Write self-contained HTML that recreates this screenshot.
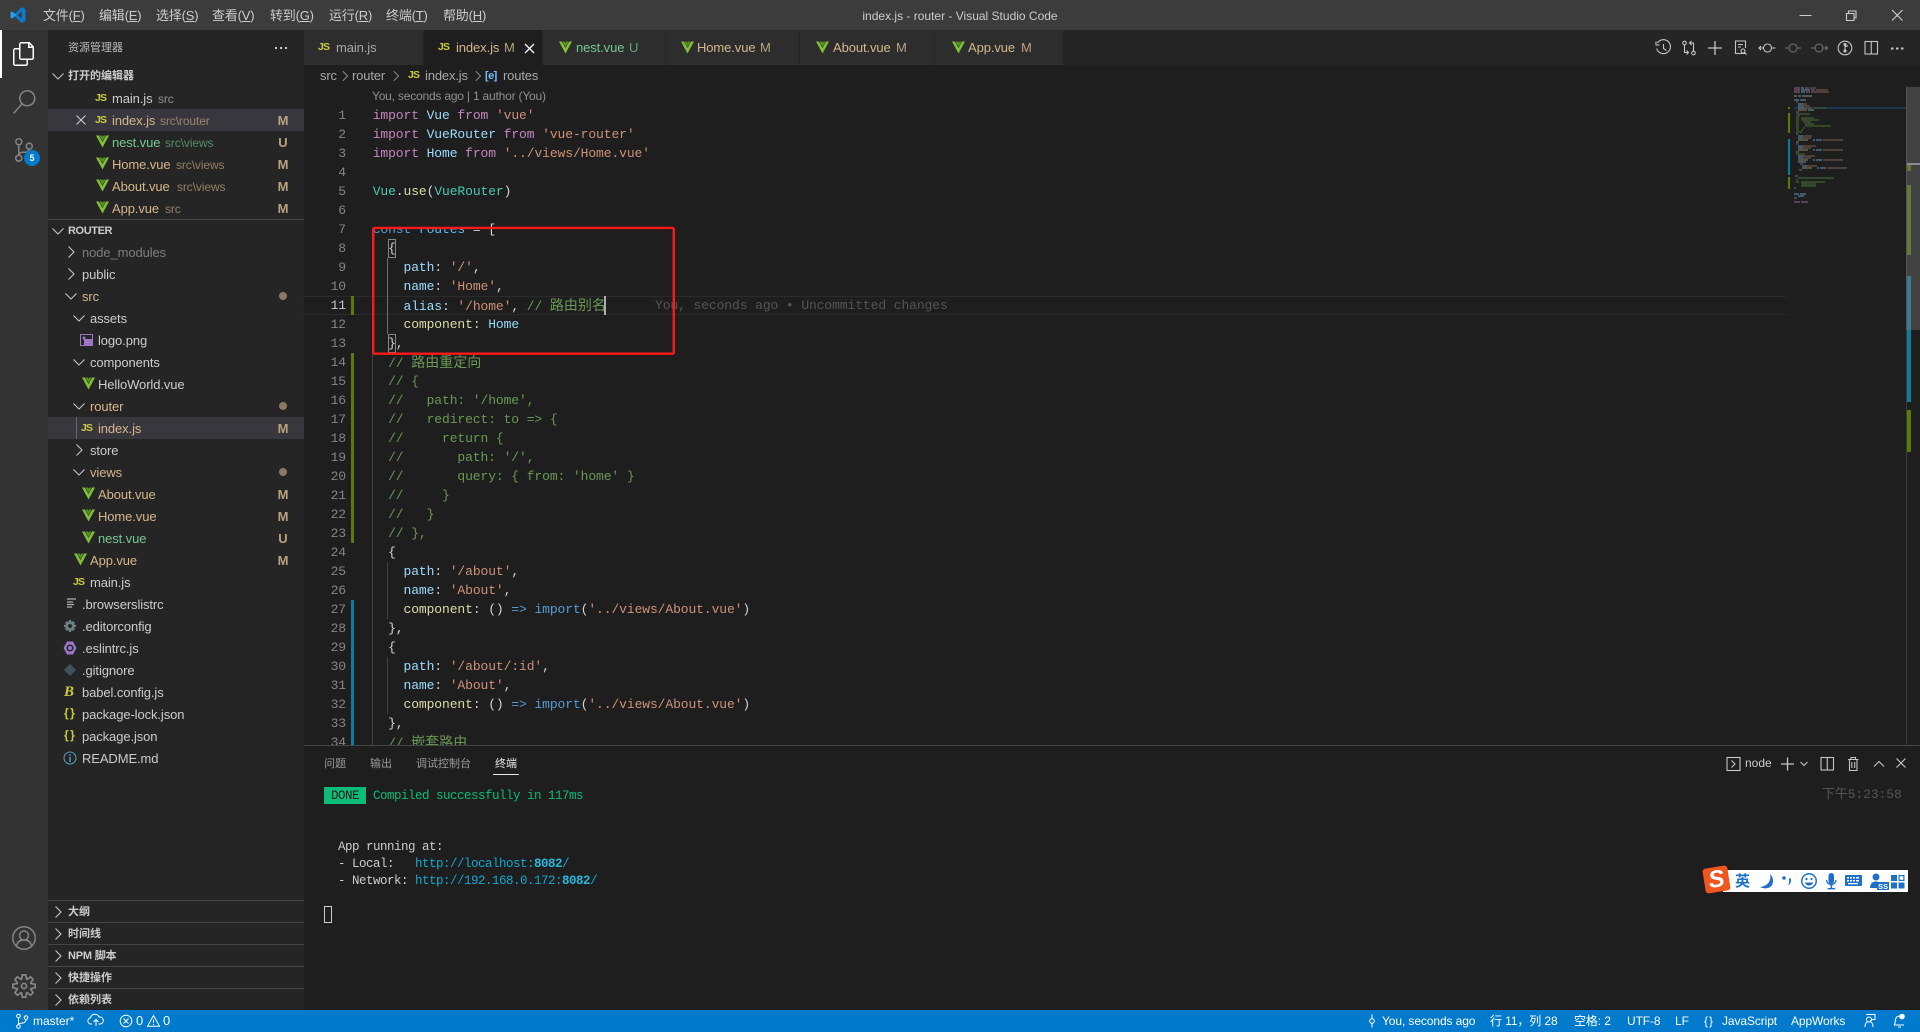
<!DOCTYPE html>
<html lang="zh"><head><meta charset="utf-8"><title>index.js - router - Visual Studio Code</title>
<style>
*{box-sizing:border-box;margin:0;padding:0}
html,body{width:1920px;height:1032px;overflow:hidden;background:#1e1e1e}
body{position:relative;font-family:"Liberation Sans","Noto Sans CJK SC",sans-serif;font-size:13px;color:#ccc}
.a{position:absolute}
.t{position:absolute;line-height:22px;height:22px;white-space:nowrap;letter-spacing:-.1px;margin-top:1px}
.d{position:absolute;line-height:22px;height:22px;white-space:nowrap;font-size:12px;opacity:.62;letter-spacing:-.1px;margin-top:1px}
.js{position:absolute;line-height:22px;height:22px;color:#cbcb41;font-size:10.5px;font-weight:700;letter-spacing:-.9px}
.h{position:absolute;line-height:22px;height:22px;font-size:11px;font-weight:700;white-space:nowrap;color:#ccc}
.m{color:#d5b78a}.u{color:#73c991}.dim{color:#7e7e7e}
.bd{position:absolute;left:276px;width:14px;text-align:center;line-height:22px;height:22px;font-weight:700;font-size:13px;color:#b9a27e;margin-top:1px}
.dot{position:absolute;left:279px;width:8px;height:8px;border-radius:50%;background:#8a7a63}
.sep{position:absolute;left:48px;width:256px;height:1px;background:#454545}
.tab{position:absolute;top:30px;height:35px;background:#2d2d2d;border-right:1px solid #252526}
.tt{position:absolute;top:37px;line-height:22px;white-space:nowrap;letter-spacing:-.1px;font-size:13px}
.menu{position:absolute;top:5px;line-height:22px;font-size:13px;white-space:nowrap;color:#ccc;letter-spacing:-.2px}
.menu u{text-decoration:underline;text-underline-offset:1px}
.cm{position:absolute;left:0;top:0;width:1920px;height:1032px}
.l{position:absolute;left:372.7px;height:19px;line-height:19px;white-space:pre;font-family:"Liberation Mono","Noto Sans CJK SC",monospace;font-size:13px;letter-spacing:-.1px;color:#d4d4d4}
.n{position:absolute;left:300px;width:46px;text-align:right;height:19px;line-height:19px;font-family:"Liberation Mono",monospace;font-size:13px;letter-spacing:-.1px;color:#858585}
.l u{text-decoration:none;font-family:"Noto Sans CJK SC",sans-serif;font-size:14px;letter-spacing:0}
.k{color:#c586c0}.v{color:#9cdcfe}.c{color:#4fc1ff}.s{color:#ce9178}.g{color:#6a9955}.f{color:#dcdcaa}.e{color:#4ec9b0}.b{color:#569cd6}
.st{position:absolute;top:1010px;line-height:22px;height:22px;font-size:12px;color:#fff;white-space:nowrap;letter-spacing:-.1px}
.bc{position:absolute;top:65px;line-height:22px;font-size:13px;color:#a8a8a8;white-space:nowrap;letter-spacing:-.15px}
.term{position:absolute;left:338px;height:17px;line-height:17px;white-space:pre;font-family:"Liberation Mono",monospace;font-size:12.5px;letter-spacing:-.5px;color:#ccc;margin-top:1px}
.pt{position:absolute;top:753px;line-height:22px;font-size:11px;color:#9a9a9a;white-space:nowrap}
.ic{fill:none;stroke:#c5c5c5;stroke-width:1.1}
</style></head><body>
<svg width="0" height="0" style="position:absolute"><defs>
<symbol id="vue" viewBox="0 0 13 13"><path fill="#80c038" d="M0 .5h2.8L6.5 7l3.7-6.5H13L6.5 12.5z"/><path fill="#5a9428" d="M3.4 .5h2.3l.8 1.4.8-1.4h2.3L6.5 6z"/></symbol>
<symbol id="cr" viewBox="0 0 16 16"><path fill="none" stroke="#c5c5c5" stroke-width="1.1" d="M5.5 2.5l5.5 5.5-5.5 5.5"/></symbol>
<symbol id="cd" viewBox="0 0 16 16"><path fill="none" stroke="#c5c5c5" stroke-width="1.1" d="M2.5 5.5L8 11l5.5-5.5"/></symbol>
</defs></svg>

<!-- title bar -->
<div class="a" style="left:0;top:0;width:1920px;height:30px;background:#3c3c3c"></div>
<svg class="a" style="left:9px;top:6px" width="18" height="18" viewBox="0 0 24 24"><path fill="#0a7bd0" fill-rule="evenodd" d="M17 1.5l5 2.5v16l-5 2.5-9-8.7-4 3L2 15.7V8.3l2-1 4 3zM17 7l-5.5 5 5.500 5z"/><path fill="#2fa6ef" d="M2 8.300l2-1 4 3 1.800 1.700-1.800 1.800-4 3L2 15.700z" opacity=".8"/></svg>
<div class="menu" style="left:43px">文件(<u>F</u>)</div>
<div class="menu" style="left:99px">编辑(<u>E</u>)</div>
<div class="menu" style="left:156px">选择(<u>S</u>)</div>
<div class="menu" style="left:212px">查看(<u>V</u>)</div>
<div class="menu" style="left:270px">转到(<u>G</u>)</div>
<div class="menu" style="left:329px">运行(<u>R</u>)</div>
<div class="menu" style="left:386px">终端(<u>T</u>)</div>
<div class="menu" style="left:443px">帮助(<u>H</u>)</div>
<div class="a" style="left:760px;top:5px;width:400px;text-align:center;line-height:22px;font-size:12px;color:#ccc">index.js - router - Visual Studio Code</div>
<svg class="cm" style="pointer-events:none;height:30px"><path stroke="#ccc" fill="none" d="M1799.500 15.500h12M1846.500 13.500h7.500v7h-7.500zM1848.500 13.500v-2.500h7.500v7h-2M1892 10l10.500 10.500M1902.500 10L1892 20.500" stroke-width="1.100"/></svg>

<!-- activity bar -->
<div class="a" style="left:0;top:30px;width:48px;height:980px;background:#333"></div>
<div class="a" style="left:0;top:30px;width:2px;height:48px;background:#fff"></div>
<svg class="a" style="left:12px;top:42px" width="24" height="24" viewBox="0 0 24 24"><path fill="#fff" d="M17.500 0h-9L7 1.500V6H2.500L1 7.500v15.070L2.500 24h12.070L16 22.570V18h4.700l1.300-1.430V4.500L17.500 0zm0 2.120l2.380 2.380H17.500V2.120zm-3 20.380h-12v-15H7v9.070L8.500 18h6v4.500zm6-6h-12v-15H16V6h4.500v10.500z"/></svg>
<svg class="a" style="left:12px;top:90px" width="24" height="24" viewBox="0 0 24 24"><path fill="#858585" d="M15.250 0a8.250 8.250 0 0 0-6.180 13.720L1 22.880l1.120 1 8.050-9.120A8.251 8.251 0 1 0 15.250.01V0zm0 15a6.750 6.750 0 1 1 0-13.500 6.750 6.750 0 0 1 0 13.500z"/></svg>
<svg class="a" style="left:12px;top:138px" width="24" height="24" viewBox="0 0 24 24"><path fill="#858585" d="M21.007 8.222A3.738 3.738 0 0 0 15.045 5.200a3.737 3.737 0 0 0 1.156 6.583 2.988 2.988 0 0 1-2.668 1.670h-2.990a4.456 4.456 0 0 0-2.989 1.165V7.400a3.737 3.737 0 1 0-1.494 0v9.117a3.776 3.776 0 1 0 1.816.099 2.990 2.990 0 0 1 2.668-1.667h2.990a4.484 4.484 0 0 0 4.223-3.039 3.736 3.736 0 0 0 3.250-3.687zM4.565 3.738a2.242 2.242 0 1 1 4.484 0 2.242 2.242 0 0 1-4.484 0zm4.484 16.441a2.242 2.242 0 1 1-4.484 0 2.242 2.242 0 0 1 4.484 0zm8.221-9.715a2.242 2.242 0 1 1 0-4.485 2.242 2.242 0 0 1 0 4.485z"/></svg>
<div class="a" style="left:24px;top:150px;width:16px;height:16px;border-radius:50%;background:#007acc;color:#fff;font-size:9px;font-weight:700;text-align:center;line-height:16px">5</div>
<svg class="a" style="left:12px;top:926px" width="24" height="24" viewBox="0 0 24 24" fill="none" stroke="#858585" stroke-width="1.500"><circle cx="12" cy="12" r="11.200"/><circle cx="12" cy="9.500" r="4.500"/><path d="M4.500 20c.800-4.500 3.500-6 7.500-6s6.700 1.500 7.500 6"/></svg>
<svg class="a" style="left:12px;top:974px" width="24" height="24" viewBox="0 0 24 24"><path fill="#858585" fill-rule="evenodd" d="M19.850 8.750l4.150.830v4.840l-4.150.830 2.350 3.520-3.430 3.430-3.520-2.350-.830 4.150H9.580l-.830-4.150-3.520 2.350-3.430-3.430 2.350-3.520L0 14.420V9.580l4.150-.830L1.800 5.230 5.230 1.800l3.520 2.350L9.580 0h4.840l.830 4.150 3.520-2.350 3.430 3.430-2.350 3.520zm-1.570 5.070l4-.810v-2l-4-.810-.540-1.300 2.290-3.430-1.430-1.430-3.430 2.290-1.300-.540-.810-4h-2l-.810 4-1.300.540-3.430-2.290-1.430 1.430L6.380 8.900l-.540 1.300-4 .810v2l4 .810.540 1.300-2.290 3.430 1.430 1.430 3.430-2.290 1.300.540.810 4h2l.810-4 1.300-.540 3.430 2.290 1.430-1.430-2.290-3.430.540-1.300zM12 8.570A3.430 3.430 0 1 1 12 15.430 3.430 3.430 0 0 1 12 8.570zm0 1.720a1.710 1.710 0 1 0 0 3.420 1.710 1.710 0 0 0 0-3.420z"/></svg>

<!-- sidebar -->
<div class="a" style="left:48px;top:30px;width:256px;height:980px;background:#252526"></div>
<div class="h" style="left:68px;top:37px;font-weight:400;color:#bbb">资源管理器</div>
<div class="a" style="left:275px;top:47px;width:2px;height:2px;background:#ccc"></div>
<div class="a" style="left:280px;top:47px;width:2px;height:2px;background:#ccc"></div>
<div class="a" style="left:285px;top:47px;width:2px;height:2px;background:#ccc"></div>
<svg class="a" style="left:50px;top:68px" width="16" height="16"><use href="#cd"/></svg>
<div class="h" style="left:68px;top:65px">打开的编辑器</div>
<div class="a" style="left:48px;top:109px;width:256px;height:22px;background:#37373d"></div>
<div class="js" style="left:95px;top:87px">JS</div><div class="t" style="left:112px;top:87px">main.js</div><div class="d" style="left:158px;top:87px">src</div>
<svg class="a" style="left:75px;top:114px" width="12" height="12"><path stroke="#ccc" stroke-width="1.100" d="M1.500 1.500l9 9M10.500 1.500l-9 9"/></svg>
<div class="js" style="left:95px;top:109px">JS</div><div class="t m" style="left:112px;top:109px">index.js</div><div class="d m" style="left:160px;top:109px">src\router</div><div class="bd" style="top:109px">M</div>
<svg class="a" style="left:96px;top:135px" width="13" height="13"><use href="#vue"/></svg><div class="t u" style="left:112px;top:131px">nest.vue</div><div class="d u" style="left:165px;top:131px">src\views</div><div class="bd u" style="top:131px">U</div>
<svg class="a" style="left:96px;top:157px" width="13" height="13"><use href="#vue"/></svg><div class="t m" style="left:112px;top:153px">Home.vue</div><div class="d m" style="left:176px;top:153px">src\views</div><div class="bd" style="top:153px">M</div>
<svg class="a" style="left:96px;top:179px" width="13" height="13"><use href="#vue"/></svg><div class="t m" style="left:112px;top:175px">About.vue</div><div class="d m" style="left:177px;top:175px">src\views</div><div class="bd" style="top:175px">M</div>
<svg class="a" style="left:96px;top:201px" width="13" height="13"><use href="#vue"/></svg><div class="t m" style="left:112px;top:197px">App.vue</div><div class="d m" style="left:165px;top:197px">src</div><div class="bd" style="top:197px">M</div>
<div class="sep" style="top:219px"></div>
<svg class="a" style="left:50px;top:223px" width="16" height="16"><use href="#cd"/></svg>
<div class="h" style="left:68px;top:220px;letter-spacing:-.4px">ROUTER</div>

<svg class="a" style="left:63px;top:244px" width="16" height="16"><use href="#cr"/></svg><div class="t dim" style="left:82px;top:241px">node_modules</div>
<svg class="a" style="left:63px;top:266px" width="16" height="16"><use href="#cr"/></svg><div class="t" style="left:82px;top:263px">public</div>
<svg class="a" style="left:63px;top:288px" width="16" height="16"><use href="#cd"/></svg><div class="t m" style="left:82px;top:285px">src</div><div class="dot" style="top:292px"></div>
<svg class="a" style="left:71px;top:310px" width="16" height="16"><use href="#cd"/></svg><div class="t" style="left:90px;top:307px">assets</div>
<svg class="a" style="left:80px;top:334px" width="13" height="12"><rect x=".5" y=".5" width="12" height="11" fill="none" stroke="#a074c4"/><path fill="#a074c4" d="M4 5h9v7H4z"/><circle cx="4" cy="4" r="1.500" fill="#a074c4"/></svg><div class="t" style="left:98px;top:329px">logo.png</div>
<svg class="a" style="left:71px;top:354px" width="16" height="16"><use href="#cd"/></svg><div class="t" style="left:90px;top:351px">components</div>
<svg class="a" style="left:82px;top:377px" width="13" height="13"><use href="#vue"/></svg><div class="t" style="left:98px;top:373px">HelloWorld.vue</div>
<svg class="a" style="left:71px;top:398px" width="16" height="16"><use href="#cd"/></svg><div class="t m" style="left:90px;top:395px">router</div><div class="dot" style="top:402px"></div>
<div class="a" style="left:48px;top:417px;width:256px;height:22px;background:#37373d"></div>
<div class="a" style="left:76px;top:417px;width:1px;height:22px;background:#6a6a6a"></div>
<div class="js" style="left:81px;top:417px">JS</div><div class="t m" style="left:98px;top:417px">index.js</div><div class="bd" style="top:417px">M</div>
<svg class="a" style="left:71px;top:442px" width="16" height="16"><use href="#cr"/></svg><div class="t" style="left:90px;top:439px">store</div>
<svg class="a" style="left:71px;top:464px" width="16" height="16"><use href="#cd"/></svg><div class="t m" style="left:90px;top:461px">views</div><div class="dot" style="top:468px"></div>
<svg class="a" style="left:82px;top:487px" width="13" height="13"><use href="#vue"/></svg><div class="t m" style="left:98px;top:483px">About.vue</div><div class="bd" style="top:483px">M</div>
<svg class="a" style="left:82px;top:509px" width="13" height="13"><use href="#vue"/></svg><div class="t m" style="left:98px;top:505px">Home.vue</div><div class="bd" style="top:505px">M</div>
<svg class="a" style="left:82px;top:531px" width="13" height="13"><use href="#vue"/></svg><div class="t u" style="left:98px;top:527px">nest.vue</div><div class="bd u" style="top:527px">U</div>
<svg class="a" style="left:74px;top:553px" width="13" height="13"><use href="#vue"/></svg><div class="t m" style="left:90px;top:549px">App.vue</div><div class="bd" style="top:549px">M</div>
<div class="js" style="left:73px;top:571px">JS</div><div class="t" style="left:90px;top:571px">main.js</div>
<svg class="a" style="left:67px;top:598px" width="10" height="10"><path stroke="#b0b0b0" stroke-width="1.300" d="M0 1h9M0 4h6M0 6.500h7M0 9h5"/></svg><div class="t" style="left:82px;top:593px">.browserslistrc</div>
<svg class="a" style="left:64px;top:620px" width="12" height="12" viewBox="0 0 24 24"><path fill="#6d8086" fill-rule="evenodd" d="M10 0h4l1 4 3-2 4 4-2 3 4 1v4l-4 1 2 3-4 4-3-2-1 4h-4l-1-4-3 2-4-4 2-3-4-1v-4l4-1-2-3 4-4 3 2zM12 8a4 4 0 1 0 0 8 4 4 0 0 0 0-8z"/></svg><div class="t" style="left:82px;top:615px">.editorconfig</div>
<svg class="a" style="left:63px;top:641px" width="14" height="14" viewBox="0 0 14 14"><path fill="#a074c4" fill-rule="evenodd" d="M4 .5h6L13.500 7 10 13.500H4L.5 7zM7 3.500a3.500 3.500 0 1 0 0 7 3.500 3.500 0 0 0 0-7z"/><circle cx="7" cy="7" r="2" fill="#7a82d8"/></svg><div class="t" style="left:82px;top:637px">.eslintrc.js</div>
<svg class="a" style="left:64px;top:664px" width="12" height="12" viewBox="0 0 12 12"><path fill="#41535b" d="M6 0l6 6-6 6-6-6z"/></svg><div class="t" style="left:82px;top:659px">.gitignore</div>
<div class="a" style="left:64px;top:681px;line-height:22px;color:#cbcb41;font-family:'Liberation Serif',serif;font-style:italic;font-weight:700;font-size:15px">B</div><div class="t" style="left:82px;top:681px">babel.config.js</div>
<div class="a" style="left:64px;top:703px;line-height:20px;color:#cbcb41;font-weight:700;font-size:12px;letter-spacing:1.500px">{}</div><div class="t" style="left:82px;top:703px">package-lock.json</div>
<div class="a" style="left:64px;top:725px;line-height:20px;color:#cbcb41;font-weight:700;font-size:12px;letter-spacing:1.500px">{}</div><div class="t" style="left:82px;top:725px">package.json</div>
<svg class="a" style="left:63px;top:751px" width="14" height="14" viewBox="0 0 14 14"><circle cx="7" cy="7" r="6" fill="none" stroke="#519aba" stroke-width="1.100"/><path stroke="#519aba" stroke-width="1.500" d="M7 3.200v1.600M7 6v5"/></svg><div class="t" style="left:82px;top:747px">README.md</div>

<div class="sep" style="top:900px"></div><div class="sep" style="top:922px"></div><div class="sep" style="top:944px"></div><div class="sep" style="top:966px"></div><div class="sep" style="top:988px"></div>
<svg class="a" style="left:50px;top:904px" width="16" height="16"><use href="#cr"/></svg><div class="h" style="left:68px;top:901px">大纲</div>
<svg class="a" style="left:50px;top:926px" width="16" height="16"><use href="#cr"/></svg><div class="h" style="left:68px;top:923px">时间线</div>
<svg class="a" style="left:50px;top:948px" width="16" height="16"><use href="#cr"/></svg><div class="h" style="left:68px;top:945px;letter-spacing:-.2px">NPM 脚本</div>
<svg class="a" style="left:50px;top:970px" width="16" height="16"><use href="#cr"/></svg><div class="h" style="left:68px;top:967px">快捷操作</div>
<svg class="a" style="left:50px;top:992px" width="16" height="16"><use href="#cr"/></svg><div class="h" style="left:68px;top:989px">依赖列表</div>

<!-- tab strip -->
<div class="a" style="left:304px;top:30px;width:1616px;height:35px;background:#252526"></div>
<div class="tab" style="left:304px;width:120px"></div>
<div class="tab" style="left:424px;width:119px;background:#1e1e1e"></div>
<div class="tab" style="left:543px;width:123px"></div>
<div class="tab" style="left:666px;width:134px"></div>
<div class="tab" style="left:800px;width:135px"></div>
<div class="tab" style="left:935px;width:129px"></div>
<div class="js" style="left:318px;top:36px">JS</div><div class="tt" style="left:336px;color:#a6a6a6">main.js</div>
<div class="js" style="left:438px;top:36px">JS</div><div class="tt m" style="left:456px">index.js</div><div class="tt" style="left:504px;color:#b9a27e">M</div>
<svg class="a" style="left:524px;top:43px" width="11" height="11"><path stroke="#fff" stroke-width="1.300" d="M1 1l9 9M10 1l-9 9"/></svg>
<svg class="a" style="left:559px;top:41px" width="13" height="13"><use href="#vue"/></svg><div class="tt u" style="left:576px">nest.vue</div><div class="tt u" style="left:629px;opacity:.75">U</div>
<svg class="a" style="left:681px;top:41px" width="13" height="13"><use href="#vue"/></svg><div class="tt m" style="left:697px">Home.vue</div><div class="tt" style="left:760px;color:#b9a27e">M</div>
<svg class="a" style="left:816px;top:41px" width="13" height="13"><use href="#vue"/></svg><div class="tt m" style="left:833px">About.vue</div><div class="tt" style="left:896px;color:#b9a27e">M</div>
<svg class="a" style="left:952px;top:41px" width="13" height="13"><use href="#vue"/></svg><div class="tt m" style="left:968px">App.vue</div><div class="tt" style="left:1021px;color:#b9a27e">M</div>

<!-- editor actions -->
<svg class="cm" style="height:66px" viewBox="0 0 1920 66" width="1920" height="66">
<g class="ic">
<path d="M1657.500 43a7 7 0 1 1-.800 5.500M1656 41.500v3.500h3.500M1663.500 44v4.500l3 2"/>
<circle cx="1684.500" cy="43" r="1.800"/><circle cx="1693.500" cy="53" r="1.800"/><path d="M1684.500 45v7.500h4M1686.500 50.500l2 2-2 2M1693.500 51v-8h-4M1691.500 41l-2 2 2 2"/>
<path stroke-width="1.300" d="M1708 48h14M1715 41v14"/>
<path d="M1745.500 53.500h-10v-12.500h10v7M1738 44.500h5M1738 47h3"/><circle cx="1743" cy="51" r="2"/><path d="M1744.500 52.500l2 2"/>
<circle cx="1767.500" cy="48" r="4"/><path d="M1759 48h4.500M1771.500 48h4M1761 46l-2 2 2 2"/>
<g stroke="#6f6f6f"><circle cx="1793" cy="48" r="4"/><path d="M1785 48h4M1797 48h4"/><circle cx="1819" cy="48" r="4"/><path d="M1811 48h4M1823 48h4.500M1825.500 46l2 2-2 2"/></g>
<circle cx="1845" cy="48" r="6.800"/><path d="M1845 44v7M1845 47l3-1.500"/><circle cx="1845" cy="44.500" r="1" fill="#c5c5c5"/><circle cx="1845" cy="51" r="1" fill="#c5c5c5"/>
<rect x="1865" y="41.500" width="12.500" height="12.500"/><path d="M1871.250 41.500v12.500"/>
</g>
<path fill="#c5c5c5" d="M1891 47.500h2.500v2H1891zM1896 47.500h2.500v2H1896zM1901 47.500h2.500v2H1901z"/>
</svg>

<!-- breadcrumb -->
<div class="bc" style="left:320px">src</div>
<svg class="a" style="left:340px;top:70px" width="10" height="12" viewBox="3 1 10 14"><path fill="none" stroke="#a0a0a0" d="M5.500 2.500l5.500 5.500-5.500 5.500"/></svg>
<div class="bc" style="left:352px">router</div>
<svg class="a" style="left:391px;top:70px" width="10" height="12" viewBox="3 1 10 14"><path fill="none" stroke="#a0a0a0" d="M5.500 2.500l5.500 5.500-5.500 5.500"/></svg>
<div class="js" style="left:408px;top:64px">JS</div>
<div class="bc" style="left:425px">index.js</div>
<svg class="a" style="left:473px;top:70px" width="10" height="12" viewBox="3 1 10 14"><path fill="none" stroke="#a0a0a0" d="M5.500 2.500l5.500 5.500-5.500 5.500"/></svg>
<div class="bc" style="left:485px;color:#75beff;font-size:11px;font-weight:700;letter-spacing:-.6px">[e]</div>
<div class="bc" style="left:503px">routes</div>

<!-- editor -->
<div class="a" id="ed" style="left:304px;top:87px;width:1616px;height:658px;overflow:hidden;background:#1e1e1e"></div>
<div class="a" style="left:372px;top:87px;height:19px;line-height:19px;font-size:12px;color:#8f8f8f;white-space:nowrap;letter-spacing:-.2px">You, seconds ago | 1 author (You)</div>
<div class="a" style="left:300px;top:296px;width:1486px;height:19px;border-top:1px solid #2b2b2b;border-bottom:1px solid #2b2b2b"></div>
<div class="a" style="left:351px;top:296px;width:3px;height:19px;background:#587c0c"></div>
<div class="a" style="left:351px;top:353px;width:3px;height:190px;background:#587c0c"></div>
<div class="a" style="left:351px;top:600px;width:3px;height:145px;background:#0c7d9d"></div>
<div class="a" style="left:372px;top:239px;width:1px;height:506px;background:#404040"></div>
<div class="a" style="left:387px;top:258px;width:1px;height:76px;background:#707070"></div>
<div class="a" style="left:387px;top:562px;width:1px;height:57px;background:#404040"></div>
<div class="a" style="left:387px;top:657px;width:1px;height:57px;background:#404040"></div>
<div class="a" style="left:388px;top:239px;width:8px;height:19px;border:1px solid #888"></div>
<div class="a" style="left:388px;top:334px;width:8px;height:19px;border:1px solid #888"></div>
<div class="a" style="left:604px;top:296px;width:1.500px;height:19px;background:#aeafad"></div>

<div class="n" style="top:106px">1</div><div class="l" style="top:106px"><span class="k">import</span> <span class="v">Vue</span> <span class="k">from</span> <span class="s">'vue'</span></div>
<div class="n" style="top:125px">2</div><div class="l" style="top:125px"><span class="k">import</span> <span class="v">VueRouter</span> <span class="k">from</span> <span class="s">'vue-router'</span></div>
<div class="n" style="top:144px">3</div><div class="l" style="top:144px"><span class="k">import</span> <span class="v">Home</span> <span class="k">from</span> <span class="s">'../views/Home.vue'</span></div>
<div class="n" style="top:163px">4</div>
<div class="n" style="top:182px">5</div><div class="l" style="top:182px"><span class="e">Vue</span>.<span class="f">use</span>(<span class="e">VueRouter</span>)</div>
<div class="n" style="top:201px">6</div>
<div class="n" style="top:220px">7</div><div class="l" style="top:220px"><span class="b">const</span> <span class="c">routes</span> = [</div>
<div class="n" style="top:239px">8</div><div class="l" style="top:239px">  {</div>
<div class="n" style="top:258px">9</div><div class="l" style="top:258px">    <span class="v">path</span>: <span class="s">'/'</span>,</div>
<div class="n" style="top:277px">10</div><div class="l" style="top:277px">    <span class="v">name</span>: <span class="s">'Home'</span>,</div>
<div class="n" style="top:296px;color:#c6c6c6">11</div><div class="l" style="top:296px">    <span class="v">alias</span>: <span class="s">'/home'</span>, <span class="g">// <u>路由别名</u></span></div>
<div class="l" style="top:296px;left:655px;color:#555">You, seconds ago • Uncommitted changes</div>
<div class="n" style="top:315px">12</div><div class="l" style="top:315px">    <span class="f">component</span>: <span class="v">Home</span></div>
<div class="n" style="top:334px">13</div><div class="l" style="top:334px">  },</div>
<div class="n" style="top:353px">14</div><div class="l g" style="top:353px">  // <u>路由重定向</u></div>
<div class="n" style="top:372px">15</div><div class="l g" style="top:372px">  // {</div>
<div class="n" style="top:391px">16</div><div class="l g" style="top:391px">  //   path: '/home',</div>
<div class="n" style="top:410px">17</div><div class="l g" style="top:410px">  //   redirect: to =&gt; {</div>
<div class="n" style="top:429px">18</div><div class="l g" style="top:429px">  //     return {</div>
<div class="n" style="top:448px">19</div><div class="l g" style="top:448px">  //       path: '/',</div>
<div class="n" style="top:467px">20</div><div class="l g" style="top:467px">  //       query: { from: 'home' }</div>
<div class="n" style="top:486px">21</div><div class="l g" style="top:486px">  //     }</div>
<div class="n" style="top:505px">22</div><div class="l g" style="top:505px">  //   }</div>
<div class="n" style="top:524px">23</div><div class="l g" style="top:524px">  // },</div>
<div class="n" style="top:543px">24</div><div class="l" style="top:543px">  {</div>
<div class="n" style="top:562px">25</div><div class="l" style="top:562px">    <span class="v">path</span>: <span class="s">'/about'</span>,</div>
<div class="n" style="top:581px">26</div><div class="l" style="top:581px">    <span class="v">name</span>: <span class="s">'About'</span>,</div>
<div class="n" style="top:600px">27</div><div class="l" style="top:600px">    <span class="f">component</span>: () <span class="b">=&gt;</span> <span class="b">import</span>(<span class="s">'../views/About.vue'</span>)</div>
<div class="n" style="top:619px">28</div><div class="l" style="top:619px">  },</div>
<div class="n" style="top:638px">29</div><div class="l" style="top:638px">  {</div>
<div class="n" style="top:657px">30</div><div class="l" style="top:657px">    <span class="v">path</span>: <span class="s">'/about/:id'</span>,</div>
<div class="n" style="top:676px">31</div><div class="l" style="top:676px">    <span class="v">name</span>: <span class="s">'About'</span>,</div>
<div class="n" style="top:695px">32</div><div class="l" style="top:695px">    <span class="f">component</span>: () <span class="b">=&gt;</span> <span class="b">import</span>(<span class="s">'../views/About.vue'</span>)</div>
<div class="n" style="top:714px">33</div><div class="l" style="top:714px">  },</div>
<div class="n" style="top:733px">34</div><div class="l g" style="top:733px">  // <u>嵌套路由</u></div>

<!-- red box -->
<div class="a" style="left:372px;top:218px;width:114px;height:9px;background:#1e1e1e"></div>
<svg class="cm" width="1920" height="1032" viewBox="0 0 1920 1032" style="pointer-events:none"><rect x="373.200" y="227.900" width="300.600" height="125.800" rx="1.500" fill="none" stroke="#fb1a1a" stroke-width="2.400"/></svg>

<!-- minimap + scrollbar -->
<svg class="cm" width="1920" height="1032" viewBox="0 0 1920 1032" fill="none" stroke-width="1.600" style="pointer-events:none">
<path stroke="#1f3a55" stroke-width="1.800" d="M1794 108h112"/>
<path stroke="#6b4a69" d="M1794 88h6M1805 88h4M1794 90h6M1811 90h4M1794 92h6M1806 92h4M1794 202h6M1801 202h7"/>
<path stroke="#4e6f80" d="M1801 88h3M1801 90h9M1801 92h4M1794 100h5M1800 100h6M1798 104h5M1798 106h5M1798 108h6M1798 136h5M1798 138h5M1798 146h5M1798 148h5M1798 156h5M1798 158h5M1798 162h8M1802 166h5M1794 194h5M1800 194h6M1798 196h6M1813 140h2M1816 140h6M1813 150h2M1816 150h6M1813 160h2M1816 160h6M1817 168h2M1820 168h6"/>
<path stroke="#5e4a40" d="M1810 88h6M1816 90h12M1811 92h18M1803 104h4M1803 106h7M1804 108h8M1803 136h9M1803 138h8M1803 146h13M1803 148h8M1803 156h12M1803 158h8M1823 140h20M1823 150h20M1823 160h20M1827 168h20M1807 166h10"/>
<path stroke="#5f6f68" d="M1794 96h3M1798 96h3M1802 96h10M1808 110h6"/>
<path stroke="#666653" d="M1798 110h9M1798 140h10M1798 150h10M1798 160h10M1802 168h10"/>
<path stroke="#3c5330" d="M1814 108h12M1796 114h14M1796 116h4M1796 118h3M1801 118h13M1796 120h3M1801 120h18M1796 122h3M1803 122h8M1796 124h3M1805 124h9M1796 126h3M1805 126h26M1796 128h3M1803 128h2M1796 130h3M1801 130h2M1796 132h6M1796 154h9M1798 178h36M1796 182h3M1801 182h24M1801 184h15M1801 186h15M1796 180h2"/>
<path stroke="#555" d="M1796 102h2M1796 112h3M1796 134h2M1796 142h3M1796 144h2M1796 152h3M1800 164h3M1799 170h3M1794 188h2M1795 176h3M1794 198h3"/>
<path stroke="#587c0c" stroke-width="2" d="M1789 107v2M1789 113v20M1789 177v12"/>
<path stroke="#0c7d9d" stroke-width="2" d="M1789 139v36"/>
</svg>
<div class="a" style="left:1906px;top:87px;width:1px;height:658px;background:#3c3c3c"></div>
<div class="a" style="left:1907px;top:165px;width:4px;height:6px;background:#587c0c"></div>
<div class="a" style="left:1907px;top:185px;width:4px;height:70px;background:#587c0c"></div>
<div class="a" style="left:1907px;top:276px;width:4px;height:126px;background:#0c7d9d"></div>
<div class="a" style="left:1907px;top:410px;width:4px;height:42px;background:#587c0c"></div>
<div class="a" style="left:1906px;top:87px;width:14px;height:243px;background:rgba(121,121,121,.4)"></div>
<div class="a" style="left:1907px;top:163px;width:13px;height:2px;background:#8a8a8a"></div>

<!-- panel -->
<div class="a" style="left:304px;top:745px;width:1616px;height:265px;background:#1e1e1e;border-top:1px solid #454545"></div>
<div class="pt" style="left:324px">问题</div>
<div class="pt" style="left:370px">输出</div>
<div class="pt" style="left:416px">调试控制台</div>
<div class="pt" style="left:495px;color:#e7e7e7">终端</div>
<div class="a" style="left:493px;top:774px;width:26px;height:1px;background:#e7e7e7"></div>
<div class="a" style="left:324px;top:787px;width:42px;height:17px;background:#0dbc79"></div>
<div class="term" style="left:331px;top:787px;color:#1e1e1e">DONE</div>
<div class="term" style="left:373px;top:787px;color:#0dbc79">Compiled successfully in 117ms</div>
<div class="term" style="top:838px">App running at:</div>
<div class="term" style="top:855px">- Local:   <span style="color:#11a8cd">http://localhost:</span><span style="color:#29b8db;font-weight:700">8082</span><span style="color:#11a8cd">/</span></div>
<div class="term" style="top:872px">- Network: <span style="color:#11a8cd">http://192.168.0.172:</span><span style="color:#29b8db;font-weight:700">8082</span><span style="color:#11a8cd">/</span></div>
<div class="a" style="left:324px;top:906px;width:8px;height:17px;border:1px solid #ccc"></div>
<div class="a" style="left:1822px;top:786px;line-height:18px;font-size:13px;color:#555;white-space:nowrap;font-family:'Liberation Mono','Noto Sans CJK SC',monospace;letter-spacing:-.1px">下午5:23:58</div>

<svg class="cm" width="1920" height="1032" viewBox="0 0 1920 1032" style="pointer-events:none">
<g class="ic">
<rect x="1727" y="757.500" width="13" height="13"/><path d="M1731.500 760.500l3.500 3.500-3.500 3.500"/>
<path stroke-width="1.300" d="M1781 764h13M1787.500 757.500v13"/>
<path d="M1800.500 762l3.500 3.500 3.500-3.500"/>
<rect x="1821" y="757.500" width="12.500" height="12.500"/><path d="M1827.250 757.500v12.500"/>
<path d="M1848 759.500h10.500M1851 759.500v-2h4.500v2M1849.500 759.500v11h7.500v-11M1851.800 762v6M1854.700 762v6"/>
<path d="M1874 766.500l5-5 5 5M1896.500 758.500l9 9M1905.500 758.500l-9 9"/>
</g></svg>
<div class="a" style="left:1745px;top:752px;line-height:22px;font-size:12px;color:#ccc">node</div>

<!-- sogou IME -->
<div class="a" style="left:1723px;top:870px;width:185px;height:22px;background:#fff"></div>
<div class="a" style="left:1704px;top:867px;width:25px;height:25px;background:#f0561d;border-radius:3px;transform:rotate(-9deg);color:#fff;font:italic 700 24px/25px 'Liberation Sans',sans-serif;text-align:center">S</div>
<div class="a" style="left:1735px;top:870px;line-height:22px;font-size:15px;font-weight:700;color:#1f6fc6;font-family:'Noto Sans CJK SC',sans-serif">英</div>
<svg class="a" style="left:1755px;top:870px" width="153" height="22" viewBox="1755 870 153 22"><g fill="#1f6fc6">
<path d="M1770 874c1.500 6-1.500 12-10 13 6 3 13 1 13-6 0-3-1-5-3-7z"/>
<circle cx="1784" cy="878" r="1.800"/><path d="M1789 878.500h2c.500 3-.500 5-2 6.500l-.800-.500c.800-1.500 1.300-2.500 1-4h-.200z"/>
<path fill-rule="evenodd" d="M1809 873a8 8 0 1 0 0 16 8 8 0 0 0 0-16zm0 1.500a6.500 6.500 0 1 1 0 13 6.500 6.500 0 0 1 0-13z"/><circle cx="1806.500" cy="879" r="1.100"/><circle cx="1811.500" cy="879" r="1.100"/><path d="M1805 882.500h8c-.500 2-2 3-4 3s-3.500-1-4-3z"/>
<rect x="1828.500" y="873" width="5.500" height="11" rx="2.700"/><path d="M1826 880h1.300a4 4 0 0 0 8 0h1.300a5.300 5.300 0 0 1-4.500 5.200V888h3v1.400h-7.500V888h3v-2.800a5.300 5.300 0 0 1-4.600-5.200z"/>
<path fill-rule="evenodd" d="M1846 875h15a1 1 0 0 1 1 1v9a1 1 0 0 1-1 1h-15a1 1 0 0 1-1-1v-9a1 1 0 0 1 1-1zm1 2v1.500h2V877zm3 0v1.500h2V877zm3 0v1.500h2V877zm3 0v1.500h3V877zm-9 3v1.500h2V880zm3 0v1.500h2V880zm3 0v1.500h2V880zm3 0v1.500h3V880zm-8 3v1.300h10V883z"/>
<circle cx="1876" cy="877" r="3.500"/><path d="M1870 888c0-4 2-6.500 6-6.500 2 0 3 .500 4 1.500v5z"/><rect x="1877" y="882" width="12" height="8"/>
<path fill-rule="evenodd" d="M1891 875h6v6h-6zM1891 882.500h6v6h-6zM1898.500 882.500h6v6h-6zM1898.500 875h6v6h-6zm1.200 1.200v3.600h3.600v-3.600z"/>
</g><text x="1878" y="889" font-size="7.500" font-weight="700" fill="#fff" font-family="Liberation Sans,sans-serif">SS</text></svg>

<!-- status bar -->
<div class="a" style="left:0;top:1010px;width:1920px;height:22px;background:#007acc"></div>
<svg class="cm" width="1920" height="1032" viewBox="0 0 1920 1032" style="pointer-events:none"><g fill="none" stroke="#fff" stroke-width="1">
<circle cx="18.500" cy="1016" r="1.800"/><circle cx="18.500" cy="1026.500" r="1.800"/><circle cx="26" cy="1017.500" r="1.800"/><path d="M18.500 1018v6.500M26 1019.500c0 3-2.500 3.500-5 3.800-1.500.200-2.500.800-2.500 1.500"/>
<path d="M92 1024h-1.500a3.200 3.200 0 0 1 0-6.300 4.500 4.500 0 0 1 8.500-.700 3.500 3.500 0 0 1 1.500 7h-2M96 1026v-6M93.500 1022l2.500-2.500 2.500 2.500"/>
<circle cx="126" cy="1021" r="5.800"/><path d="M123.500 1018.500l5 5M128.500 1018.500l-5 5"/>
<path d="M153.500 1015.500l6 10.800h-12zM153.500 1019.500v3.500M153.500 1024v1"/>
<circle cx="1372" cy="1021" r="2.300"/><path d="M1372 1014.500v4.200M1372 1023.300v4.200"/>
<path d="M1866 1014.500h9v5h-3l-2 2M1865 1027c0-2.500.800-4.800 3-5.300M1873 1027c0-2.500-.800-4.800-3-5.300"/><circle cx="1869" cy="1019.500" r="2.500"/>
<path d="M1894 1025c1-1 1.300-2 1.300-4 0-3 1.700-5 4-5M1904 1025h-10M1898 1027h3"/></g>
<circle cx="1902" cy="1016.500" r="2.800" fill="#fff"/></svg>
<div class="st" style="left:33px;letter-spacing:0">master*</div>
<div class="st" style="left:136px;font-size:13px">0</div>
<div class="st" style="left:163px;font-size:13px">0</div>
<div class="st" style="left:1382px">You, seconds ago</div>
<div class="st" style="left:1490px">行 11，列 28</div>
<div class="st" style="left:1574px">空格: 2</div>
<div class="st" style="left:1627px">UTF-8</div>
<div class="st" style="left:1675px">LF</div>
<div class="st" style="left:1704px;letter-spacing:1px">{}</div>
<div class="st" style="left:1722px">JavaScript</div>
<div class="st" style="left:1791px">AppWorks</div>
</body></html>
